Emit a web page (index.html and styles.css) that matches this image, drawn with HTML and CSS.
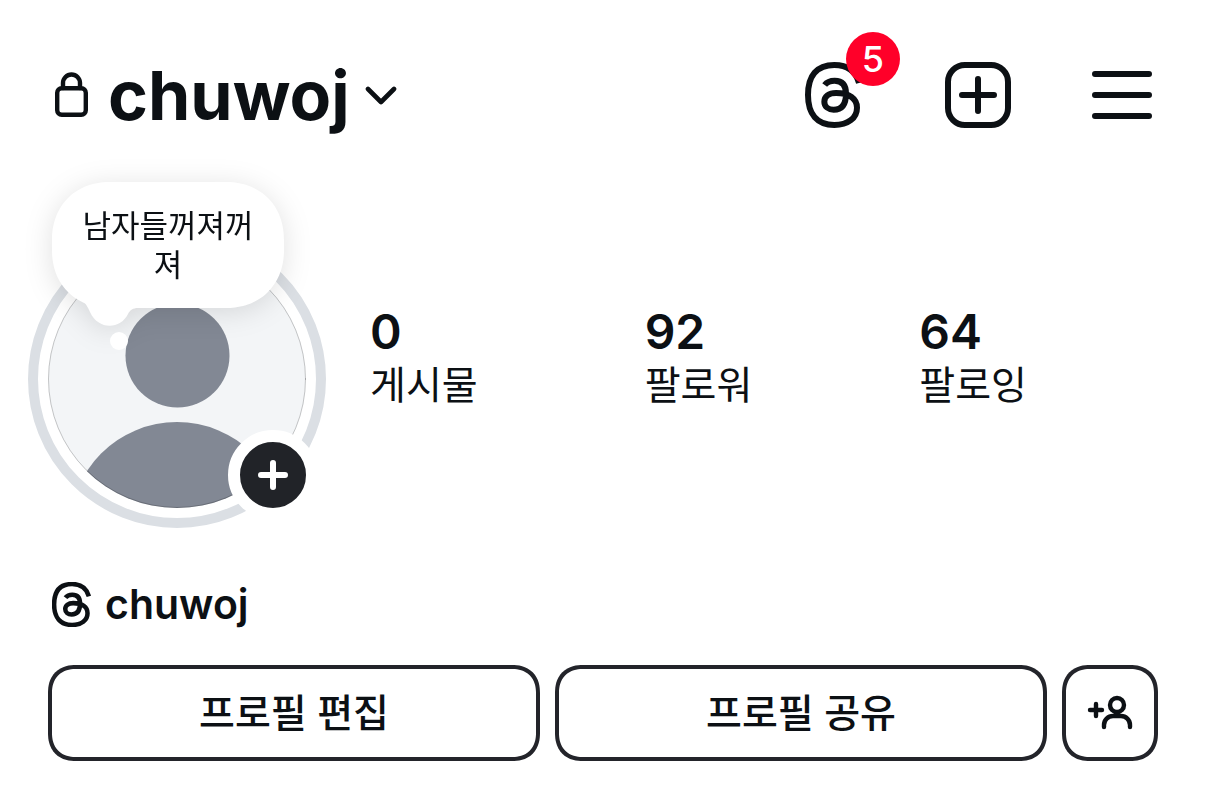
FILE: index.html
```html
<!DOCTYPE html>
<html lang="ko">
<head>
<meta charset="utf-8">
<meta name="viewport" content="width=device-width, initial-scale=1">
<title>chuwoj</title>
<link rel="stylesheet" href="styles.css">
</head>
<body>
<svg class="defs" aria-hidden="true">
  <symbol id="threads" viewBox="45 125 171 198">
    <path d="M207 188C197 152 172 134 133 134C80 134 54 166 54 224C54 282 82 314 133 314C174 314 201 293 201 262C201 235 178 218 138 218C116 218 103 228 103 244C103 259 115 268 131 268C155 268 168 252 168 220C168 194 157 181 134 181C120 181 110 186 104 194" fill="none" stroke="currentColor"/>
  </symbol>
</svg>
<header class="topbar">
  <button class="account" type="button">
    <svg class="lock" viewBox="0 0 34 46" aria-hidden="true"><path d="M8 16V11a8.500 8.500 0 0 1 17 0v5"/><rect x="2.200" y="16.200" width="28.600" height="26.600" rx="4.500"/></svg>
    <h1 class="name">chuwoj</h1>
    <svg class="chevron" viewBox="0 0 32 20" aria-hidden="true"><path d="M3 4L16 17L29 4"/></svg>
  </button>
  <nav class="actions">
    <button class="icon-button" type="button" aria-label="Threads">
      <svg class="threads-large" aria-hidden="true"><use href="#threads"/></svg>
      <span class="badge">5</span>
    </button>
    <button class="icon-button" type="button" aria-label="만들기">
      <svg class="create" viewBox="0 0 66 66" aria-hidden="true"><rect x="3" y="3" width="60" height="60" rx="17"/><path d="M33 17v32M17 33h32"/></svg>
    </button>
    <button class="icon-button" type="button" aria-label="메뉴">
      <svg class="menu" viewBox="0 0 60 66" aria-hidden="true"><path d="M3 12h54M3 33h54M3 54h54"/></svg>
    </button>
  </nav>
</header>
<main>
  <section class="profile">
    <div class="avatar">
      <svg class="portrait" viewBox="0 0 298 298" aria-hidden="true">
        <clipPath id="photo"><circle cx="149" cy="149" r="129"/></clipPath>
        <circle cx="149" cy="149" r="144" fill="#fff" stroke="#dbdfe4" stroke-width="10"/>
        <g clip-path="url(#photo)">
          <rect width="298" height="298" fill="#f3f5f7"/>
          <circle cx="149.500" cy="125.500" r="52" fill="#828894"/>
          <circle cx="149" cy="299" r="107" fill="#828894"/>
        </g>
        <circle cx="149" cy="149" r="128.500" fill="none" stroke="#000" stroke-opacity=".2"/>
      </svg>
      <div class="note">
        <p class="note-text">남자들꺼져꺼져</p>
        <svg class="tail" viewBox="0 0 60 40" aria-hidden="true"><path d="M0 12C4 15 6 20 8 24C16 42 38 42 46 26C48 22 51 20 56 20L56 10L0 8Z"/></svg>
      </div>
      <span class="note-dot"></span>
      <button class="add" type="button" aria-label="스토리 추가">
        <svg class="plus" viewBox="0 0 30 30" aria-hidden="true"><path d="M15 3v24M3 15h24"/></svg>
      </button>
    </div>
    <ul class="stats">
      <li><a class="stat" href="#posts"><strong>0</strong><span>게시물</span></a></li>
      <li><a class="stat" href="#followers"><strong>92</strong><span>팔로워</span></a></li>
      <li><a class="stat" href="#following"><strong>64</strong><span>팔로잉</span></a></li>
    </ul>
  </section>
  <a class="threads-link" href="#threads-profile">
    <svg class="threads-small" aria-hidden="true"><use href="#threads"/></svg>
    <span>chuwoj</span>
  </a>
  <div class="buttons">
    <button class="button" type="button"><span>프로필 편집</span></button>
    <button class="button" type="button"><span>프로필 공유</span></button>
    <button class="button square" type="button" aria-label="사람 찾아보기">
      <svg class="people" viewBox="0 0 46 36" aria-hidden="true"><circle cx="30" cy="10" r="7"/><path d="M17 32v-2a9 9 0 0 1 9-9h8a9 9 0 0 1 9 9v2M9 9v12M3 15h12"/></svg>
    </button>
  </div>
</main>
</body>
</html>
```
FILE: styles.css
```css
* {
  box-sizing: border-box;
}

body {
  margin: 0;
  background: #fff;
  color: #0c1014;
  font-family: Inter, "Noto Sans CJK KR", sans-serif;
}

button {
  margin: 0;
  padding: 0;
  border: 0;
  background: none;
  color: inherit;
  font: inherit;
}

a {
  color: inherit;
  text-decoration: none;
}

svg {
  display: block;
  flex: none;
  fill: none;
  stroke-linecap: round;
  stroke-linejoin: round;
}

.defs {
  position: absolute;
  width: 0;
  height: 0;
}

.topbar {
  display: flex;
  align-items: center;
  justify-content: space-between;
  height: 190px;
  padding: 0 54px 0 55px;
}

.account {
  display: flex;
  align-items: center;
}

.name {
  margin: 0 15px 0 19px;
  font-size: 68px;
  font-weight: 700;
  line-height: 84px;
}

.lock {
  width: 34px;
  height: 46px;
  stroke: currentColor;
  stroke-width: 4.4;
}

.chevron {
  width: 32px;
  height: 20px;
  stroke: currentColor;
  stroke-width: 4.6;
}

.actions {
  display: flex;
  align-items: center;
  gap: 81px;
}

.icon-button {
  position: relative;
}

.threads-large {
  width: 57px;
  height: 66px;
  margin-right: 2px;
  stroke-linecap: butt;
  stroke-width: 18;
}

.badge {
  position: absolute;
  top: -30px;
  left: 41px;
  width: 54px;
  height: 54px;
  border-radius: 50%;
  background: #ff0029;
  color: #fff;
  font-size: 36px;
  font-weight: 500;
  line-height: 55px;
  text-align: center;
}

.create,
.menu {
  height: 66px;
  stroke: currentColor;
  stroke-width: 6;
}

.create {
  width: 66px;
}

.menu {
  width: 60px;
}

.profile {
  display: flex;
  align-items: center;
  gap: 44px;
  padding: 40px 12px 0 28px;
}

.avatar {
  position: relative;
  flex: none;
}

.portrait {
  width: 298px;
  height: 298px;
}

.note {
  position: absolute;
  top: -48px;
  left: 24px;
  width: 232px;
  padding: 24px 28px;
  border-radius: 58px;
  corner-shape: superellipse(1.1);
  background: #fff;
  filter: drop-shadow(0 4px 14px rgb(0 0 0 / 12%));
}

.note-text {
  margin: 0;
  font-size: 31px;
  line-height: 39px;
  text-align: center;
}

.tail {
  position: absolute;
  top: 106px;
  left: 30px;
  width: 60px;
  height: 40px;
  fill: #fff;
}

.note-dot {
  position: absolute;
  top: 102px;
  left: 82px;
  width: 18px;
  height: 18px;
  border-radius: 50%;
  background: #fff;
}

.add {
  position: absolute;
  right: 8px;
  bottom: 8px;
  display: grid;
  place-items: center;
  width: 90px;
  height: 90px;
  border: 12px solid #fff;
  border-radius: 50%;
  background: #212328;
}

.plus {
  width: 30px;
  height: 30px;
  stroke: #fff;
  stroke-width: 6;
}

.stats {
  display: grid;
  flex: 1;
  grid-template-columns: repeat(3, 1fr);
  margin: 0;
  padding: 0 0 42px;
  list-style: none;
}

.stat {
  display: flex;
  flex-direction: column;
  font-size: 39px;
  line-height: 53px;
}

.stat strong {
  font-size: 48px;
  font-weight: 600;
}

.threads-link {
  display: flex;
  align-items: center;
  gap: 14px;
  width: max-content;
  margin: 50px 0 0 52px;
  font-size: 41px;
  font-weight: 600;
  line-height: 52px;
}

.threads-small {
  width: 39px;
  height: 45px;
  stroke-linecap: butt;
  stroke-width: 20;
}

.buttons {
  display: flex;
  gap: 15px;
  padding: 35px 48px 32px;
}

.button {
  display: grid;
  flex: 1;
  place-items: center;
  height: 96px;
  border: 4px solid #23242a;
  border-radius: 28px;
  corner-shape: superellipse(1.2);
  font-size: 39px;
  font-weight: 500;
}

.button span {
  padding-bottom: 6px;
}

.square {
  flex: 0 0 96px;
}

.people {
  width: 46px;
  height: 36px;
  stroke: currentColor;
  stroke-width: 4.4;
}
```
